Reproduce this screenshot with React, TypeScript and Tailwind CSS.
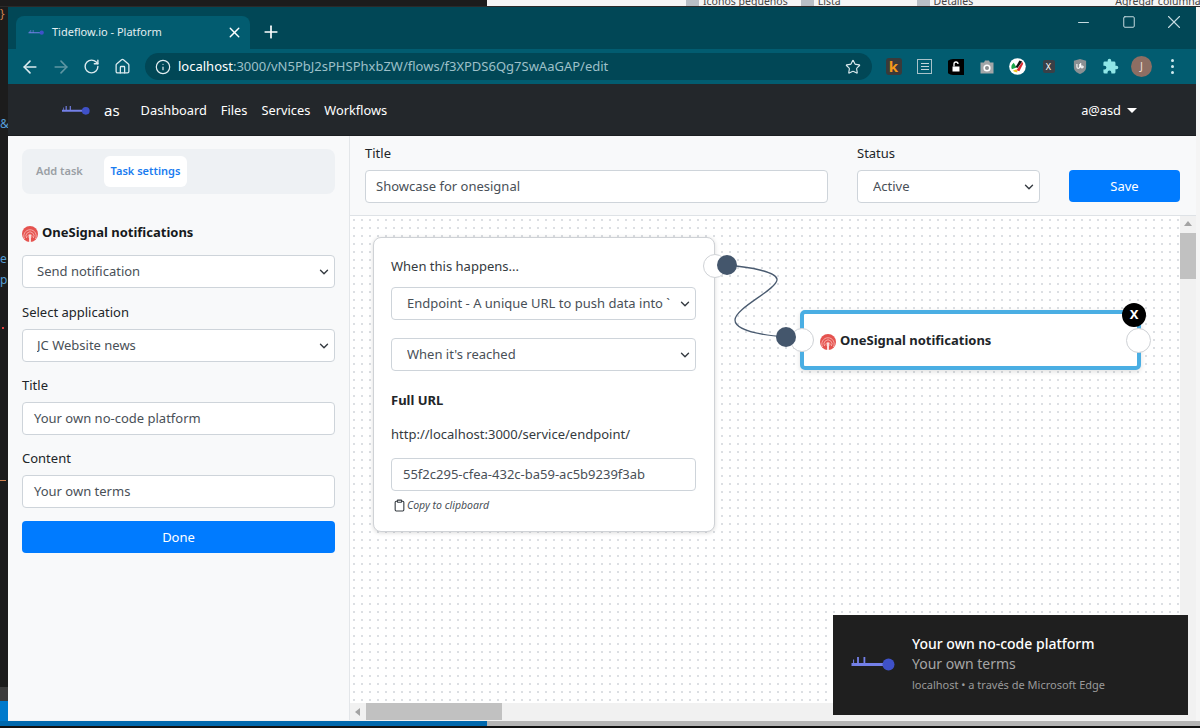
import React from "react";
import { ArrowLeft, ArrowRight, RotateCw, Home, Info, Star, X, Plus, Minus, Square, ChevronDown, Clipboard } from "lucide-react";

const font = "[font-family:'Noto_Sans','Open_Sans',sans-serif]";

function Logo({ className }: { className: string }) {
  return (
    <svg viewBox="0 0 44 14" className={className}>
      <path d="M1 6h1.6V2.5h1V6h3V0h1.8v6h4.6V0h1.8v6H36v3H1z" fill="#7480e8" />
      <circle cx="38" cy="7.5" r="6" fill="#3f51c8" />
    </svg>
  );
}

function SignalIcon({ className }: { className: string }) {
  return (
    <svg viewBox="0 0 16 16" className={className}>
      <circle cx="8" cy="8" r="8" fill="#e5534f" />
      <path d="M2.6 13a6.2 6.2 0 1 1 10.8 0M4.6 12a4 4 0 1 1 6.8 0M6.4 11.5a2 2 0 1 1 3.2 0" fill="none" stroke="#f8b4b0" strokeWidth="0.9" />
      <rect x="7.2" y="9" width="1.6" height="7" fill="#fff" />
    </svg>
  );
}

function Select({ text, pad = "pl-[15px]", className = "" }: { text: string; pad?: string; className?: string }) {
  return (
    <div className={`h-[33px] bg-white border border-[#ced4da] rounded-[4px] flex items-center ${pad} pr-[3px] text-[13px] text-[#495057] ${className}`}>
      <span className="flex-1 overflow-hidden whitespace-nowrap pt-[1px]">{text}</span>
      <ChevronDown size={14} strokeWidth={2.4} className="text-[#343a40] shrink-0 ml-[1px]" />
    </div>
  );
}

function Field({ text, pad = "pl-[11px]", className = "" }: { text: string; pad?: string; className?: string }) {
  return (
    <div className={`h-[33px] bg-white border border-[#ced4da] rounded-[4px] flex items-center ${pad} pt-[1px] text-[13px] text-[#495057] whitespace-nowrap ${className}`}>
      {text}
    </div>
  );
}

function Label({ text, className = "" }: { text: string; className?: string }) {
  return <div className={`text-[13px] leading-[20px] text-[#212529] ${className}`}>{text}</div>;
}

function Ext({ children }: { children: React.ReactNode }) {
  return <div className="w-[31px] h-[24px] flex items-center justify-center shrink-0">{children}</div>;
}

function ExtensionIcons() {
  return (
    <div className="flex items-center">
      <Ext>
        <div className="w-[16px] h-[17px] bg-[#3a3a3a] rounded-[3px] flex items-center justify-center text-[15px] font-bold leading-none text-[#f59a1b]">k</div>
      </Ext>
      <Ext>
        <div className="w-[15px] h-[15px] border border-[#a9c2c9] flex flex-col items-center justify-center gap-[2px]">
          <span className="w-[8px] h-[1px] bg-[#c2d4d9]" />
          <span className="w-[8px] h-[1px] bg-[#c2d4d9]" />
          <span className="w-[8px] h-[1px] bg-[#c2d4d9]" />
        </div>
      </Ext>
      <Ext>
        <svg viewBox="0 0 16 16" className="w-[16px] h-[16px]">
          <path d="M5 0h11v16H5A8 8 0 0 1 5 0z" fill="#000" />
          <rect x="4.5" y="7.5" width="7" height="5" fill="#fff" />
          <path d="M6 7.5V5a2 2 0 0 1 4 0" fill="none" stroke="#fff" strokeWidth="1.3" />
        </svg>
      </Ext>
      <Ext>
        <svg viewBox="0 0 16 16" className="w-[16px] h-[16px]">
          <path d="M1.5 3.5h3.5l1-2h4l1 2h3.5v11h-13z" fill="#a3a6a8" />
          <circle cx="8" cy="9" r="3.6" fill="#fff" />
          <circle cx="8" cy="9" r="2" fill="#8a8d8f" />
        </svg>
      </Ext>
      <Ext>
        <svg viewBox="0 0 18 18" className="w-[17px] h-[17px]">
          <circle cx="9" cy="9" r="8.8" fill="#fff" />
          <path d="M3 12a6 6 0 0 1 2-7l3 5z" fill="#1aa64a" />
          <path d="M8 13l6-9 1 2-4 8z" fill="#d9282f" />
          <path d="M11 2.6l3 1-5 7-2-1z" fill="#111" />
          <path d="M4 13.5a6 6 0 0 0 5 1.5l-1-3z" fill="#f0c21a" />
        </svg>
      </Ext>
      <Ext>
        <div className="w-[12px] h-[13px] bg-[#3a4047] rounded-[2px] flex items-center justify-center text-[9px] leading-none text-white">X</div>
      </Ext>
      <Ext>
        <svg viewBox="0 0 16 18" className="w-[14px] h-[17px]">
          <path d="M8 0.5l7 2v7c0 4-3 6.5-7 8-4-1.5-7-4-7-8v-7z" fill="#8b9093" />
          <path d="M4.5 6v3.5a1.6 1.6 0 0 0 3.2 0V6M8.8 5v4.5a1.6 1.6 0 0 0 3 0 1.6 1.6 0 0 0-3 0" fill="none" stroke="#fff" strokeWidth="1.2" />
        </svg>
      </Ext>
      <Ext>
        <svg viewBox="0 0 24 24" className="w-[17px] h-[17px]">
          <path d="M20.5 11H19V7a2 2 0 0 0-2-2h-4V3.5a2.5 2.5 0 0 0-5 0V5H4a2 2 0 0 0-2 2v3.8h1.5a2.7 2.7 0 0 1 0 5.4H2V20a2 2 0 0 0 2 2h3.8v-1.5a2.7 2.7 0 0 1 5.4 0V22H17a2 2 0 0 0 2-2v-4h1.5a2.5 2.5 0 0 0 0-5z" fill="#8fe6e6" />
        </svg>
      </Ext>
      <Ext>
        <div className="w-[21px] h-[21px] rounded-full bg-[#8d6e63] flex items-center justify-center text-[11px] text-[#e9dcd6]">J</div>
      </Ext>
      <Ext>
        <div className="flex flex-col gap-[3px]">
          <span className="w-[3px] h-[3px] rounded-full bg-[#cfe9ee]" />
          <span className="w-[3px] h-[3px] rounded-full bg-[#cfe9ee]" />
          <span className="w-[3px] h-[3px] rounded-full bg-[#cfe9ee]" />
        </div>
      </Ext>
    </div>
  );
}

function Sidebar() {
  return (
    <aside className="w-[342px] shrink-0 bg-[#f8f9fa] border-r border-[#e3e6e9] pl-[14px] pr-[14px] pt-[13px]">
      <div className="h-[45px] w-[313px] rounded-[8px] bg-[#eef1f4] flex items-center pl-[14px] text-[11px] font-semibold">
        <span className="text-[#9a9fa4] w-[68px]">Add task</span>
        <span className="h-[31px] w-[83px] bg-white rounded-[6px] flex items-center justify-center text-[#1a7cf0]">Task settings</span>
      </div>
      <div className="w-[313px]">
        <div className="mt-[29px] h-[20px] flex items-center text-[13px] font-bold text-[#16191c]">
          <SignalIcon className="w-[16px] h-[16px] mr-[4px] mt-[2px]" />
          OneSignal notifications
        </div>
        <Select text="Send notification" pad="pl-[14px]" className="mt-[12px]" />
        <Label text="Select application" className="mt-[14px]" />
        <Select text="JC Website news" pad="pl-[14px]" className="mt-[7px]" />
        <Label text="Title" className="mt-[13px]" />
        <Field text="Your own no-code platform" className="mt-[7px]" />
        <Label text="Content" className="mt-[13px]" />
        <Field text="Your own terms" className="mt-[7px]" />
        <div className="mt-[13px] h-[32px] pt-[1px] rounded-[4px] bg-[#007bff] text-white text-[13px] flex items-center justify-center">Done</div>
      </div>
    </aside>
  );
}

function Canvas() {
  return (
    <div className="relative flex-1 min-h-0 bg-white overflow-hidden">
      <div className="absolute left-0 top-0 right-[16px] bottom-[17px] bg-[radial-gradient(#dcdfe3_1px,transparent_1.3px)] bg-[size:8px_8px]" />

      {/* Trigger card */}
      <div className="absolute left-[23px] top-[21px] w-[342px] h-[295px] bg-white border border-[#cfd2d6] rounded-[8px] shadow-[0_1px_4px_rgba(0,0,0,0.15)] pt-[18px] px-[17px]">
        <div className="text-[13px] leading-[20px] text-[#343a40]">When this happens...</div>
        <Select text="Endpoint - A unique URL to push data into `" className="mt-[11px] w-[305px]" />
        <Select text="When it's reached" className="mt-[18px] w-[305px]" />
        <div className="mt-[19px] text-[13px] leading-[20px] font-bold text-[#212529]">Full URL</div>
        <div className="mt-[14px] text-[13px] leading-[20px] text-[#343a40]">http://localhost:3000/service/endpoint/</div>
        <Field text="55f2c295-cfea-432c-ba59-ac5b9239f3ab" className="mt-[14px] w-[305px]" />
        <div className="mt-[5px] ml-[2px] flex items-center text-[10.5px] leading-[18px] italic text-[#495057]">
          <Clipboard size={13} strokeWidth={2} className="mr-[1px] text-[#343a40]" />
          Copy to clipboard
        </div>
      </div>

      {/* Target node */}
      <div className="absolute left-[450px] top-[94px] w-[341px] h-[60px] bg-white border-[4px] border-[#4aaee3] rounded-[5px] shadow-[0_2px_5px_rgba(0,0,0,0.12)] flex items-center pl-[16px] pt-[1px] text-[13px] font-bold text-[#212529]">
        <SignalIcon className="w-[16px] h-[16px] mr-[4px] mt-[3px]" />
        OneSignal notifications
      </div>

      {/* Wire and ports */}
      <div className="absolute left-[353px] top-[38px] w-[24px] h-[24px] rounded-full bg-white border border-[#cfd2d6]" />
      <div className="absolute left-[440px] top-[112px] w-[24px] h-[24px] rounded-full bg-white border border-[#cfd2d6]" />
      <div className="absolute left-[776px] top-[112px] w-[25px] h-[25px] rounded-full bg-white border border-[#cfd2d6]" />
      <svg className="absolute left-[360px] top-[30px] w-[100px] h-[100px]" viewBox="0 0 100 100" fill="none">
        <path d="M16 19C40 21 68 26 67 34C66 44 25 62 25 74C25 84 50 89 76 91" stroke="#4a5b70" strokeWidth="1.3" />
      </svg>
      <div className="absolute left-[367px] top-[39px] w-[20px] h-[20px] rounded-full bg-[#44566c]" />
      <div className="absolute left-[426px] top-[111px] w-[20px] h-[20px] rounded-full bg-[#44566c]" />
      <div className="absolute left-[772px] top-[87px] w-[24px] h-[24px] rounded-full bg-black text-white font-bold text-[13px] flex items-center justify-center">X</div>

      {/* Scrollbars */}
      <div className="absolute right-0 top-0 bottom-[17px] w-[16px] bg-[#f1f1f1]">
        <div className="mx-auto mt-[5px] w-0 h-0 border-x-[4px] border-x-transparent border-b-[5px] border-b-[#a3a3a3]" />
        <div className="mt-[7px] h-[46px] bg-[#c1c1c1]" />
      </div>
      <div className="absolute left-0 right-0 bottom-0 h-[17px] bg-[#f1f1f1] flex items-center pl-[5px]">
        <div className="w-0 h-0 border-y-[4px] border-y-transparent border-r-[5px] border-r-[#a3a3a3]" />
        <div className="ml-[6px] w-[136px] h-[17px] bg-[#c1c1c1]" />
      </div>
    </div>
  );
}

function Main() {
  return (
    <main className="flex-1 min-w-0 flex flex-col">
      <div className="h-[80px] bg-[#f8f9fa] border-b border-[#dee2e6] flex pl-[15px] pr-[16px] pt-[7px] shrink-0">
        <div className="w-[463px]">
          <Label text="Title" />
          <Field text="Showcase for onesignal" pad="pl-[10px]" className="mt-[7px] h-[32px]" />
        </div>
        <div className="w-[183px] ml-[29px]">
          <Label text="Status" />
          <Select text="Active" className="mt-[7px] h-[32px]" />
        </div>
        <div className="w-[111px] ml-[29px] mt-[27px] h-[32px] pt-[2px] rounded-[4px] bg-[#007bff] text-white text-[13px] flex items-center justify-center">Save</div>
      </div>
      <Canvas />
    </main>
  );
}

function NavButton({ children }: { children: React.ReactNode }) {
  return <div className="w-[31px] h-[24px] flex items-center justify-center shrink-0">{children}</div>;
}

function BrowserChrome() {
  return (
    <>
      <div className="h-[42px] bg-[#014756] flex shrink-0 pt-[9px] pl-[8px]">
        <div className="w-[234px] h-[33px] bg-[#025c70] rounded-t-[8px] flex items-center pl-[12px] pr-[7px] text-[11px] text-[#e3eef1]">
          <Logo className="w-[16px] h-[5px] mr-[8px]" />
          <span className="flex-1">Tideflow.io - Platform</span>
          <X size={17} strokeWidth={2} className="text-white" />
        </div>
        <Plus size={20} strokeWidth={2} className="text-white ml-[11px] mt-[6px]" />
        <div className="flex-1" />
        <div className="flex items-center h-[30px] -mt-[9px] text-[#c6dbe0]">
          <div className="w-[45px] flex justify-center"><Minus size={17} strokeWidth={1.6} /></div>
          <div className="w-[45px] flex justify-center"><Square size={14} strokeWidth={1.7} /></div>
          <div className="w-[45px] flex justify-center"><X size={22} strokeWidth={1.2} /></div>
        </div>
      </div>
      <div className="h-[35px] bg-[#025c70] flex items-center shrink-0 pl-[6px]">
        <NavButton><ArrowLeft size={20} strokeWidth={1.9} className="text-[#dbeaee]" /></NavButton>
        <NavButton><ArrowRight size={20} strokeWidth={1.9} className="text-[#5f96a3]" /></NavButton>
        <NavButton><RotateCw size={17} strokeWidth={2} className="text-[#dbeaee]" /></NavButton>
        <NavButton><Home size={17} strokeWidth={1.8} className="text-[#dbeaee]" /></NavButton>
        <div className="ml-[7px] w-[727px] h-[27px] rounded-full bg-[#014756] flex items-center pl-[10px] pr-[10px] text-[13px] whitespace-nowrap shrink-0">
          <Info size={16} strokeWidth={1.8} className="text-[#e3eef1] shrink-0" />
          <span className="ml-[7px] text-white">localhost</span>
          <span className="text-[#9dc0c9] flex-1">:3000/vN5PbJ2sPHSPhxbZW/flows/f3XPDS6Qg7SwAaGAP/edit</span>
          <Star size={16} strokeWidth={1.7} className="text-[#dbeaee] mr-[1px]" />
        </div>
        <div className="ml-[6px]"><ExtensionIcons /></div>
      </div>
    </>
  );
}

function NavBar() {
  return (
    <nav className="h-[52px] bg-[#23272b] flex items-center shrink-0 pl-[53px] pr-[59px] pt-[2px] text-[12.8px] text-white border-b border-[#1b1e21]">
      <Logo className="w-[29px] h-[9px]" />
      <span className="ml-[14px] text-[15px] mr-[21px]">as</span>
      <span>Dashboard</span>
      <span className="ml-[14px]">Files</span>
      <span className="ml-[14px]">Services</span>
      <span className="ml-[14px]">Workflows</span>
      <span className="flex-1" />
      <span>a@asd</span>
      <span className="ml-[6px] w-0 h-0 border-x-[5px] border-x-transparent border-t-[5px] border-t-white" />
    </nav>
  );
}

function Toast() {
  return (
    <div className="absolute left-[833px] top-[615px] w-[355px] h-[100px] bg-[#1f1f1f] flex items-center">
      <Logo className="ml-[17px] -mt-[2px] w-[45px] h-[14px] shrink-0" />
      <div className="ml-[17px] -mt-[2px]">
        <div className="text-[14px] leading-[20px] font-medium text-white">Your own no-code platform</div>
        <div className="text-[14px] leading-[19px] text-[#a6a6a6]">Your own terms</div>
        <div className="mt-[3px] text-[11px] leading-[18px] text-[#9a9a9a]">localhost • a través de Microsoft Edge</div>
      </div>
    </div>
  );
}

function ExplorerIcon() {
  return <span className="w-[13px] h-[6px] mr-[4px] bg-[#b9bfc6] shrink-0" />;
}

export default function App() {
  return (
    <div className={`relative w-[1200px] h-[728px] overflow-hidden flex flex-col bg-[#1c1c1c] ${font}`}>
      <div className="h-[7px] flex shrink-0 border-b border-[#2a2a2a]">
        <div className="w-[487px] bg-[#1c1c1c]" />
        <div className="flex-1 bg-[#f5f5f5] overflow-hidden flex text-[10.5px] leading-[6px] text-[#444] whitespace-nowrap">
          <span className="ml-[199px] flex"><ExplorerIcon /><span className="-mt-[2px]">Iconos pequeños</span></span>
          <span className="ml-[13px] flex"><ExplorerIcon /><span className="-mt-[2px]">Lista</span></span>
          <span className="ml-[76px] flex"><ExplorerIcon /><span className="-mt-[2px]">Detalles</span></span>
          <span className="ml-[142px] flex"><span className="-mt-[2px]">Agregar columnas</span></span>
        </div>
      </div>
      <div className="h-[714px] flex shrink-0">
        <div className="w-[8px] shrink-0 flex flex-col overflow-hidden text-[12px] leading-[14px]">
          <span className="text-[#d0804e]">{"}"}</span>
          <span className="mt-[96px] text-[#569cd6]">&amp;</span>
          <span className="mt-[121px] text-[#569cd6]">e</span>
          <span className="mt-[7px] text-[#569cd6]">p</span>
          <span className="mt-[40px] ml-[2px] w-[2px] h-[2px] bg-[#e04040] shrink-0" />
          <span className="mt-[151px] w-[6px] h-[1px] bg-[#d0804e] shrink-0" />
          <span className="mt-[206px] h-[14px] bg-[#3c3c3c] shrink-0" />
          <span className="flex-1 bg-[#007acc]" />
        </div>
        <div className="w-[1188px] flex flex-col shrink-0 border-b border-[#f0f0f0]">
          <BrowserChrome />
          <NavBar />
          <div className="flex-1 min-h-0 flex">
            <Sidebar />
            <Main />
          </div>
        </div>
        <div className="flex-1 bg-[#f5f5f5]" />
      </div>
      <div className="flex-1 flex">
        <div className="w-[487px] bg-[#0068ad]" />
        <div className="flex-1 bg-[#b5b5b5]" />
      </div>
      <div className="h-[2px] bg-[#111]" />
      <Toast />
    </div>
  );
}
